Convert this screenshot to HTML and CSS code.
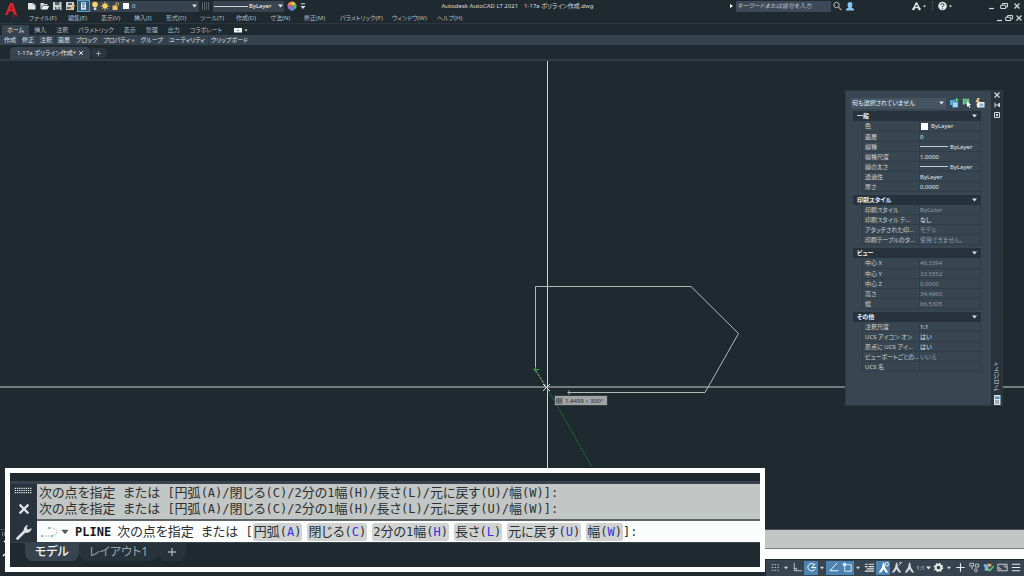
FILE: index.html
```html
<!DOCTYPE html>
<html lang="ja">
<head>
<meta charset="utf-8">
<title>Autodesk AutoCAD LT 2021</title>
<link rel="stylesheet" href="styles.css">
</head>
<body>
<svg class="defs" width="0" height="0" aria-hidden="true">
  <symbol id="caret" viewBox="0 0 5 4"><path d="M0 .5h5L2.500 3.500z" fill="currentColor"/></symbol>
  <symbol id="close" viewBox="0 0 8 8"><path d="M1.500 1.500l5 5M6.500 1.500l-5 5" stroke="currentColor" stroke-width="1.300" fill="none"/></symbol>
  <symbol id="restore" viewBox="0 0 8 8"><path d="M2.500 3V1.500h5V5H6M.7 3.200h5v3.300h-5z" stroke="currentColor" fill="none"/></symbol>
  <symbol id="min" viewBox="0 0 8 8"><path d="M2 6.500h5" stroke="currentColor" stroke-width="1.200"/></symbol>
  <symbol id="wrench" viewBox="0 0 16 16"><path d="M1.500 14.500l8-8" stroke="currentColor" stroke-width="2.600" stroke-linecap="round"/><path d="M8 8.500C7 5 8.500 1.500 12 1l-1.500 3 1.800 1.700L15.500 4c.2 3.500-3.500 6-7.500 4.500z" fill="currentColor"/></symbol>
  <symbol id="person" viewBox="0 0 10 10"><path d="M1 9.500V8l2.500-1.500C1.800 4 2.500 1 5 1s3.200 3 1.500 5.500L9 8v1.500z" fill="currentColor"/></symbol>
  <symbol id="scaleA" viewBox="0 0 12 12"><path d="M5.500 1.500h1.200L7.400 6l3 4.500H8.200L6 7.500l-2.200 3H1.600l3-4.500z" fill="currentColor"/></symbol>
</svg>

<header class="top">
  <svg class="logo" viewBox="0 0 25 24"><path d="M5 15L10 3h3l4 12h-3l-1-3.500H9L7.500 15z" fill="#d6262c"/><path d="M10.200 9.200h2.200l-.8-3.200z" fill="#5c1218"/><path d="M13 14.500v2.500h2M15.500 14.500h2.500M16.700 14.500V17" stroke="#a82429" stroke-width=".7" fill="none"/></svg>
  <div class="topmain">
    <div class="titlebar">
      <div class="quick">
        <button class="ic" aria-label="新規"><svg viewBox="0 0 13 12"><path d="M3 3h5l2.500 2v4.500H3z" fill="#e4e6e6"/><path d="M8 3v2h2.500" stroke="#78828a" stroke-width=".6" fill="none"/></svg></button>
        <button class="ic" aria-label="開く"><svg viewBox="0 0 13 12"><path d="M2.500 9.500V3h3l1 1h3v1.500H4.500z" fill="#d4d8da"/><path d="M4.800 6h6.500l-2 3.500H3z" fill="#eceeee"/></svg></button>
        <button class="ic" aria-label="上書き保存"><svg viewBox="0 0 13 12"><path d="M2 2h8.500v8H2z" fill="#ccd1d3"/><path d="M4 2h4.500v3H4zM4 7h5v3H4z" fill="#56616b"/><path d="M5 8h3" stroke="#fff"/></svg></button>
        <button class="ic" aria-label="名前を付けて保存"><svg viewBox="0 0 13 12"><path d="M2 2h8v8H2z" fill="#ccd1d3"/><path d="M4 3h4v2H4zM3 7h4v2H3z" fill="#56616b"/><path d="M6 9.500l4.500-4.500" stroke="#edb654" stroke-width="1.800"/></svg></button>
        <button class="ic on" aria-label="印刷"><svg viewBox="0 0 13 12"><path d="M3.500 1.500h6v9h-6z" fill="#e4e8ea"/><path d="M4.500 2.500h4v2h-4z" fill="#4b8fc0"/><path d="M5 6h3M5 8h3" stroke="#53616d"/></svg></button>
        <div class="layer">
          <svg viewBox="0 0 42 12" width="42" height="12"><circle cx="5" cy="4.500" r="2.800" fill="#f6d36d"/><path d="M3.800 7.500h2.500v2.500H3.800z" fill="#d9dcdc"/><path d="M15 1.500v9M10.500 6h9M12 3l6 6M18 3l-6 6" stroke="#e9b754" stroke-width=".9"/><circle cx="15" cy="6" r="2.500" fill="#ffd568"/><path d="M22.500 5.500h5v4.500h-5z" fill="#f2c460"/><path d="M26 5.500V3.500q1.300-2 2.600 0V5" stroke="#f2c460" fill="none"/><path d="M33 3h6v6h-6z" fill="#fff"/></svg>
          <select aria-label="画層"><option>0</option></select>
          <svg class="ct"><use href="#caret"/></svg>
        </div>
        <svg class="hatch" viewBox="0 0 8 8"><path d="M0 1h8M0 3h8M0 5h8M0 7h8" stroke="#909aa0" stroke-dasharray="1 1"/></svg>
        <div class="ltype"><i class="rule"></i>
          <select aria-label="線種"><option>ByLayer</option></select>
          <svg class="ct"><use href="#caret"/></svg>
        </div>
        <svg class="wheel" viewBox="0 0 10 10"><path d="M5 5V.5A4.500 4.500 0 0 1 9 3z" fill="#f4c84b"/><path d="M5 5l4-2a4.500 4.500 0 0 1-1 5.300z" fill="#63b260"/><path d="M5 5l3 3.300a4.500 4.500 0 0 1-5.500.5z" fill="#558fe2"/><path d="M5 5L2.500 8.800A4.500 4.500 0 0 1 .6 4z" fill="#ad67c9"/><path d="M5 5L.6 4A4.500 4.500 0 0 1 5 .5z" fill="#ed8651"/></svg>
        <svg class="more" viewBox="0 0 6 7"><path d="M1 .8h4" stroke="#dde0e0"/><path d="M.5 3h5L3 6z" fill="#dde0e0"/></svg>
      </div>
      <div class="apptitle"><span>Autodesk AutoCAD LT 2021</span><span>1-17a ポリライン作成.dwg</span></div>
      <div class="tools">
        <svg class="play" viewBox="0 0 4 6"><path d="M1 1l3 2-3 2z" fill="#fff"/></svg>
        <input type="text" class="search" placeholder="キーワードまたは語句を入力" aria-label="検索">
        <button class="ic" aria-label="検索"><svg viewBox="0 0 13 12"><circle cx="5.500" cy="5" r="2.700" fill="none" stroke="#b5bbbd"/><path d="M7.500 7.200l3 3" stroke="#d0a37a" stroke-width="1.200"/></svg></button>
        <button class="ic user" aria-label="サインイン"><svg viewBox="0 0 10 10"><use href="#person"/></svg></button>
        <button class="ic app" aria-label="App Store"><svg viewBox="0 0 13 12"><path d="M6.500 2.500L3.500 8.500M6.500 2.500l3 6M4.500 7.500h4" stroke="#e1e4e5" stroke-width="1.400"/><circle cx="3.500" cy="9" r="1.200" fill="#fff"/><circle cx="9.500" cy="9" r="1.200" fill="#fff"/></svg></button>
        <svg class="ct sm"><use href="#caret"/></svg>
        <i class="vsep"></i>
        <button class="ic" aria-label="ヘルプ"><svg viewBox="0 0 13 12"><circle cx="6.500" cy="6" r="4.300" fill="#e2e5e6"/><path d="M5 5q0-1.500 1.500-1.500T8 5q0 .8-1.500 1.500v.8M6.500 8.300v1" stroke="#35424d" fill="none"/></svg></button>
        <svg class="ct sm"><use href="#caret"/></svg>
        <div class="win">
          <button aria-label="最小化"><svg viewBox="0 0 8 8"><use href="#min"/></svg></button>
          <button aria-label="元に戻す"><svg viewBox="0 0 8 8"><use href="#restore"/></svg></button>
          <button aria-label="閉じる"><svg viewBox="0 0 8 8"><use href="#close"/></svg></button>
        </div>
      </div>
    </div>
    <div class="menurow">
      <nav class="menu">
        <button>ファイル(F)</button><button>編集(E)</button><button>表示(V)</button><button>挿入(I)</button><button>形式(O)</button><button>ツール(T)</button><button>作成(D)</button><button>寸法(N)</button><button>修正(M)</button><button>パラメトリック(P)</button><button>ウィンドウ(W)</button><button>ヘルプ(H)</button>
      </nav>
      <div class="docwin">
        <button aria-label="図面を最小化"><svg viewBox="0 0 8 8"><use href="#min"/></svg></button>
        <button aria-label="図面を元に戻す"><svg viewBox="0 0 8 8"><use href="#restore"/></svg></button>
        <button aria-label="図面を閉じる"><svg viewBox="0 0 8 8"><use href="#close"/></svg></button>
      </div>
    </div>
  </div>
</header>

<nav class="ribbontabs">
  <button class="active">ホーム</button><button>挿入</button><button>注釈</button><button>パラメトリック</button><button>表示</button><button>管理</button><button>出力</button><button>コラボレート</button>
  <button aria-label="リボンを最小化" class="mini"><svg viewBox="0 0 14 6"><path d="M0 1h8v4.500H0z" fill="#f3f5f4"/><path d="M3 4l1-1.500L5 4z" fill="#35424c"/><path d="M10.500 2.500h3L12 4.500z" fill="#dde0e0"/></svg></button>
</nav>
<div class="ribbonpanels">
  <button>作成</button><button>修正</button><button>注釈</button><button>画層</button><button>ブロック</button><button>プロパティ »</button><button>グループ</button><button>ユーティリティ</button><button>クリップボード</button>
</div>
<div class="filetabs">
  <div class="filetab"><span>1-17a ポリライン作成*</span><button aria-label="タブを閉じる"><svg viewBox="0 0 8 8"><use href="#close"/></svg></button></div>
  <button class="newtab" aria-label="新しいタブ"><svg viewBox="0 0 8 8"><path d="M4 1v6M1 4h6" stroke="currentColor"/></svg></button>
</div>

<main class="canvas">
  <svg class="drawing" aria-label="図面">
    <path d="M547.500 0V480" stroke="#cfd4d4"/>
    <path d="M0 326h1600" stroke="#8f9798" stroke-width="1.500"/>
    <path d="M535.500 309V225.500H691L738.500 272.500 705 331.500H569M569 329.500v4M567.500 331.500h3" fill="none" stroke="#b4babc"/>
    <path d="M535.500 309L546 326" stroke="#8fb79a" stroke-dasharray="3 1"/>
    <path d="M547 327L592 406" stroke="#1c9428" stroke-dasharray="2 1" stroke-width=".8"/>
    <path d="M533 308.500h6M535.500 306v5" stroke="#24b62c"/>
    <path d="M543 323l7 7M550 323l-7 7" stroke="#dfe3df"/>
  </svg>
  <div class="tip"><svg viewBox="0 0 8 8"><path d="M.5 2h4v5h-4zM2.500 1v7M.5 4.500h7M6 1v6M5 2h2.500M5 7h2.500" fill="none" stroke="#3f4548" stroke-width=".8"/></svg>1.4459 &lt; 300°</div>

  <aside class="palette">
    <div class="props">
      <div class="selrow">
        <div class="objsel"><select aria-label="選択オブジェクト"><option>何も選択されていません</option></select><svg class="ct"><use href="#caret"/></svg></div>
        <button aria-label="PICKADD切り替え"><svg viewBox="0 0 10 10"><path d="M1 2h5v5H1z" fill="#5ba9de"/><path d="M3.500 4h5.500v5.500H3.500z" fill="#a5d4f4" stroke="#3578ac" stroke-width=".6"/><path d="M7.700 0v4M5.700 2h4" stroke="#5ed77b" stroke-width="1.200"/></svg></button>
        <button aria-label="オブジェクトを選択"><svg viewBox="0 0 10 10"><path d="M1 1h6v5H1z" fill="#5fb681" stroke="#a8dfb8" stroke-width=".7" stroke-dasharray="1 .6"/><path d="M5 3l4 4-1.800.2L8.500 9.500l-1 .5-1.200-2.300L5 9z" fill="#fff"/></svg></button>
        <button aria-label="クイック選択"><svg viewBox="0 0 10 10"><path d="M2 4h7.500v5.500H2z" fill="#f1f3f2"/><path d="M4.500 5.500h4v3h-4z" fill="#83b4da"/><path d="M2.500 0L.5 4h1.700L1 8l4-5H3.300L5 0z" fill="#efc77a"/></svg></button>
      </div>
      <section>
        <h2>一般<svg class="ct"><use href="#caret"/></svg></h2>
        <table>
          <tr><th>色</th><td><i class="swatch"></i>ByLayer</td></tr>
          <tr><th>画層</th><td>0</td></tr>
          <tr><th>線種</th><td><i class="line"></i>ByLayer</td></tr>
          <tr><th>線種尺度</th><td>1.0000</td></tr>
          <tr><th>線の太さ</th><td><i class="line"></i>ByLayer</td></tr>
          <tr><th>透過性</th><td>ByLayer</td></tr>
          <tr><th>厚さ</th><td>0.0000</td></tr>
        </table>
      </section>
      <section>
        <h2>印刷スタイル<svg class="ct"><use href="#caret"/></svg></h2>
        <table>
          <tr class="ro"><th>印刷スタイル</th><td>ByColor</td></tr>
          <tr><th>印刷スタイル テ...</th><td>なし</td></tr>
          <tr class="ro"><th>アタッチされた印...</th><td>モデル</td></tr>
          <tr class="ro"><th>印刷テーブルのタ...</th><td>使用できません。</td></tr>
        </table>
      </section>
      <section>
        <h2>ビュー<svg class="ct"><use href="#caret"/></svg></h2>
        <table>
          <tr class="ro"><th>中心 X</th><td>46.3394</td></tr>
          <tr class="ro"><th>中心 Y</th><td>33.5552</td></tr>
          <tr class="ro"><th>中心 Z</th><td>0.0000</td></tr>
          <tr class="ro"><th>高さ</th><td>34.4960</td></tr>
          <tr class="ro"><th>幅</th><td>66.5305</td></tr>
        </table>
      </section>
      <section>
        <h2>その他<svg class="ct"><use href="#caret"/></svg></h2>
        <table>
          <tr><th>注釈尺度</th><td>1:1</td></tr>
          <tr><th>UCS アイコン オン</th><td>はい</td></tr>
          <tr><th>原点に UCS アイ...</th><td>はい</td></tr>
          <tr class="ro"><th>ビューポートごとの...</th><td>いいえ</td></tr>
          <tr><th>UCS 名</th><td></td></tr>
        </table>
      </section>
    </div>
    <div class="grip">
      <button aria-label="閉じる"><svg viewBox="0 0 8 8"><use href="#close"/></svg></button>
      <button aria-label="自動的に隠す"><svg viewBox="0 0 8 8"><path d="M2 1.500v5M2 4h2M6.500 2L4.500 4l2 2z" stroke="currentColor" fill="currentColor"/></svg></button>
      <button aria-label="プロパティ設定"><svg viewBox="0 0 8 8"><path d="M1.500 1.500h5v5h-5z" stroke="currentColor" fill="none"/><circle cx="4" cy="4" r="1.200" fill="currentColor"/></svg></button>
      <span class="vtitle">プロパティ</span>
      <svg class="pico" viewBox="0 0 8 10"><path d="M1 0h6.500v10H1z" fill="#dfe4e6"/><path d="M2 1.500h4.500v2.500H2z" fill="#4795c9"/><path d="M2 6h4M2 8h4" stroke="#637482"/></svg>
    </div>
  </aside>
</main>

<div class="cmdband">
  <div class="cmdside"><svg viewBox="0 0 5 28"><path d="M2 3h3M2 5h3" stroke="#bbc2c4" stroke-dasharray="1 1"/><path d="M4 11l1 1M3 26l2-2" stroke="#fff" stroke-width="1.500"/></svg></div>
  <div class="cmdfill"><div class="hist"></div><div class="entry"></div></div>
</div>
<footer class="status">
  <div class="stbar">
    <button class="w14" aria-label="グリッド"><svg viewBox="0 0 14 14"><path d="M3 4h9M3 7h9M3 10h9" stroke="#c6ccce" stroke-dasharray="1.500 1.500" stroke-width="1.200"/></svg></button>
    <button class="ar" aria-label="グリッド設定"><svg class="ct"><use href="#caret"/></svg></button>
    <button class="w14" aria-label="直交モード"><svg viewBox="0 0 14 14"><path d="M3.500 2v8.500H12M3.500 8H6v2.500" stroke="#c6ccce" fill="none"/></svg></button>
    <button class="w14 on" aria-label="極トラッキング"><svg viewBox="0 0 14 14"><path d="M10 4a4 4 0 1 0 .8 4M7 7h5M7 7l4-4" stroke="#fff" fill="none"/></svg></button>
    <button class="ar" aria-label="極設定"><svg class="ct"><use href="#caret"/></svg></button>
    <button class="w14 on" aria-label="トラッキング"><svg viewBox="0 0 14 14"><path d="M11 2L3 10.500h9" stroke="#fff" fill="none"/></svg></button>
    <button class="w14 on" aria-label="オブジェクトスナップ"><svg viewBox="0 0 14 14"><path d="M4 4h7v7H4z" stroke="#dff0ff" fill="none"/><path d="M2 2h3.500v3.500H2z" fill="#d6ecfb"/></svg></button>
    <button class="ar" aria-label="スナップ設定"><svg class="ct"><use href="#caret"/></svg></button>
    <button class="w14" aria-label="線の太さ"><svg viewBox="0 0 14 14"><path d="M2 3.500h3M6 3.500h6M2 6h3M6 6h6M4 8.500h8M2 11h10" stroke="#dfe2e3" stroke-width="1.300"/></svg></button>
    <button class="w14 on" aria-label="注釈表示"><svg viewBox="0 0 12 12"><use href="#scaleA"/><circle cx="9" cy="3" r="1.600" fill="none" stroke="#fff" stroke-width=".8"/></svg></button>
    <button class="w13" aria-label="注釈自動尺度"><svg viewBox="0 0 12 12"><use href="#scaleA"/><path d="M8 4l3-3M8.500 1.500h2" stroke="currentColor" stroke-width=".8"/></svg></button>
    <button class="w13" aria-label="注釈尺度"><svg viewBox="0 0 12 12"><use href="#scaleA"/></svg></button>
    <button class="ratio">1:1<svg class="ct"><use href="#caret"/></svg></button>
    <button class="w14" aria-label="ワークスペース"><svg viewBox="0 0 14 14"><circle cx="7" cy="7" r="3" fill="none" stroke="#e9ebeb" stroke-width="2"/><circle cx="7" cy="7" r="4.500" fill="none" stroke="#e9ebeb" stroke-width="1.300" stroke-dasharray="1.750 1.780"/></svg></button>
    <button class="ar" aria-label="ワークスペース設定"><svg class="ct"><use href="#caret"/></svg></button>
    <button class="w14" aria-label="注釈モニター"><svg viewBox="0 0 14 14"><path d="M7 2.500v9M2.500 7h9" stroke="#e9ebeb" stroke-width="1.200"/></svg></button>
    <button class="w14" aria-label="選択表示"><svg viewBox="0 0 14 14"><path d="M2 2.500h4v3H2zM8 3.500h3.500v3H8z" stroke="#c6ccce" fill="none"/><circle cx="8.500" cy="10" r="1.600" fill="none" stroke="#c6ccce"/><path d="M4.500 6v3" stroke="#c6ccce"/></svg></button>
    <button class="w14" aria-label="グラフィックス"><svg viewBox="0 0 14 14"><path d="M2 3.500h4v3H2z" fill="#71b5e7"/><path d="M6 3h4v3H6z" fill="#ddb667"/><path d="M3 6.500h4v4H3z" fill="#8aabe3"/><path d="M6.500 8.500l2 2 4-5" stroke="#63c86c" stroke-width="1.600" fill="none"/></svg></button>
    <button class="w14" aria-label="フルスクリーン"><svg viewBox="0 0 14 14"><path d="M2 3.500h10v7H2zM8 5.500h2.500v2M6 8.500H3.500v-2" stroke="#d4d8d9" fill="none"/></svg></button>
    <button class="w14" aria-label="カスタマイズ"><svg viewBox="0 0 14 14"><path d="M2 3.500h9M2 7h9M2 10.500h9" stroke="#e9ebeb" stroke-width="1.200"/></svg></button>
  </div>
</footer>

<section class="inset" aria-label="コマンドライン">
  <div class="insetstrip"></div>
  <div class="cmd">
    <div class="cmdtools">
      <svg class="dots" viewBox="0 0 20 8"><path d="M0 1.500h19M0 4h19M0 6.500h19" stroke="#dfe3e4" stroke-width="1.300" stroke-dasharray="1.500 1"/></svg>
      <button aria-label="コマンドラインを閉じる" class="x"><svg viewBox="0 0 8 8"><use href="#close"/></svg></button>
      <button aria-label="カスタマイズ"><svg viewBox="0 0 16 16"><use href="#wrench"/></svg></button>
    </div>
    <div class="cmdtext">
      <div class="log">
        <p>次の点を指定<b> </b>または<b> [</b>円弧<b>(A)/</b>閉じる<b>(C)/2</b>分の<b>1</b>幅<b>(H)/</b>長さ<b>(L)/</b>元に戻す<b>(U)/</b>幅<b>(W)]:</b></p>
        <p>次の点を指定<b> </b>または<b> [</b>円弧<b>(A)/</b>閉じる<b>(C)/2</b>分の<b>1</b>幅<b>(H)/</b>長さ<b>(L)/</b>元に戻す<b>(U)/</b>幅<b>(W)]:</b></p>
      </div>
      <div class="prompt">
        <svg class="pl" viewBox="0 0 20 14"><path d="M2 11h10q5-1 5-4t-5-4H9" fill="none" stroke="#a6adb0" stroke-width=".8" stroke-dasharray="2 1"/><path d="M1 10h2v2H1zM11 10h2v2h-2zM8 2h2v2H8z" fill="#78bce8"/></svg>
        <svg class="dd" viewBox="0 0 5 4"><use href="#caret"/></svg>
        <strong>PLINE</strong>
        <span>次の点を指定<b> </b>または<b> [</b></span>
        <span class="opts"><button>円弧<b>(<em>A</em>)</b></button><button>閉じる<b>(<em>C</em>)</b></button><button><b>2</b>分の<b>1</b>幅<b>(<em>H</em>)</b></button><button>長さ<b>(<em>L</em>)</b></button><button>元に戻す<b>(<em>U</em>)</b></button><button>幅<b>(<em>W</em>)</b></button></span><b>]:</b>
      </div>
    </div>
  </div>
  <div class="layouts">
    <button class="active">モデル</button><button>レイアウト1</button><button class="add" aria-label="新しいレイアウト"><svg viewBox="0 0 8 8"><path d="M4 0v8M0 4h8" stroke="currentColor" stroke-width="1.500"/></svg></button>
  </div>
</section>
</body>
</html>
```

FILE: styles.css
```css
* { box-sizing: border-box; }
body {
  margin: 0;
  height: 100vh;
  display: flex;
  flex-direction: column;
  position: relative;
  overflow: hidden;
  background: #1f2930;
  color: #d3d7d9;
  font: 6px/10px "Noto Sans", "Noto Sans CJK JP", sans-serif;
  font-feature-settings: "palt";
  white-space: nowrap;
}
.defs { position: absolute; }
svg { display: block; flex: none; }
button, input, select {
  font: inherit;
  font-feature-settings: inherit;
  color: inherit;
  background: none;
  border: 0;
  padding: 0;
  margin: 0;
  white-space: nowrap;
  appearance: none;
}
.ct { width: 5px; height: 4px; color: #dfe2e3; }
.ct.sm { width: 3px; height: 3px; }

/* title and menu */
.top { display: flex; height: 24px; border-bottom: 1px solid #2b3640; }
.logo { width: 25px; height: 24px; }
.topmain { flex: 1; min-width: 0; }
.titlebar { display: flex; height: 12px; align-items: center; }
.quick, .tools { display: flex; align-items: center; height: 12px; }
.ic { width: 13px; height: 12px; }
.ic svg { width: 100%; height: 12px; }
.ic.on { background: #315a78; border: 1px solid #59a0cf; }
.ic.on svg { height: 10px; }
.layer { display: flex; align-items: center; width: 109px; height: 11px; background: #37434f; padding-right: 2px; }
.layer select { flex: 1; }
.hatch { width: 8px; height: 8px; margin: 0 3px; }
.ltype { display: flex; align-items: center; width: 71px; height: 11px; background: #37434f; padding: 0 1px; }
.ltype select { flex: 1; padding-left: 1px; color: #fff; }
.rule { width: 34px; height: 1px; background: #cbd0d2; }
.wheel { width: 10px; height: 10px; margin-left: 3px; }
.more { width: 6px; height: 7px; margin-left: 3px; }
.apptitle { flex: 1; display: flex; justify-content: center; gap: 6px; color: #d9dddd; }
.play { width: 4px; height: 6px; margin-right: 3px; }
.search { width: 95px; height: 11px; background: #3e4958; padding: 0 1px; font-style: italic; }
.search::placeholder { color: #c0c5ca; opacity: 1; }
.user { color: #83c7f2; width: 10px; margin-left: 1px; }
.user svg { height: 10px; }
.app { margin-left: 55px; }
.vsep { width: 1px; height: 10px; background: #3a4650; margin: 0 3px 0 6px; }
.win { display: flex; gap: 5px; margin: 0 3px 0 35px; }
.win button, .docwin button { width: 8px; height: 8px; }
.win button svg, .docwin button svg { width: 8px; height: 8px; }
.menurow { display: flex; justify-content: space-between; align-items: center; height: 12px; }
.menu {
  display: grid;
  grid-template-columns: 39px 33px 33px 32px 34px 36px 34px 34px 36px 52px 45px 30px;
  padding-left: 4px;
  color: #b6bcc0;
}
.menu button { text-align: left; }
.docwin { display: flex; gap: 2px; padding-right: 1px; }

/* ribbon */
.ribbontabs { display: flex; height: 11px; color: #b6bcc0; padding-left: 2px; }
.ribbontabs button { height: 10px; margin-top: 1px; padding: 0 5px; }
.ribbontabs .active { background: #37444f; color: #e2e5e6; }
.ribbontabs .mini { padding: 2px 0; margin-left: 7px; }
.mini svg { width: 14px; height: 6px; }
.ribbonpanels { display: flex; height: 10px; padding-left: 2px; background: #37444f; color: #dde0e2; }
.ribbonpanels button { padding: 0 3px 0 2px; border-right: 1px solid #2d3943; }
.ribbonpanels button:last-child { border: 0; }
.filetabs { display: flex; align-items: flex-end; height: 16px; padding-left: 10px; border-bottom: 2px solid #303c46; }
.filetab { display: flex; align-items: center; gap: 2px; width: 80px; height: 12px; padding-left: 7px; background: #37444f; border-radius: 4px 4px 0 0; color: #e3e6e7; }
.filetab svg { width: 6px; height: 6px; }
.newtab { width: 16px; height: 10px; margin: 0 0 1px 1px; padding: 1px 4px; background: #2a353e; border-radius: 4px; color: #a3abb0; }
.newtab svg { width: 7px; height: 7px; }

/* drawing area */
.canvas { flex: 1; position: relative; overflow: hidden; min-height: 0; }
.drawing { position: absolute; inset: 0; width: 100%; height: 100%; }
.tip {
  position: absolute;
  left: 554px;
  top: 334px;
  display: flex;
  align-items: center;
  gap: 2px;
  padding: 0 4px 0 1px;
  background: #a0a4a5;
  border: 1px solid #343c40;
  color: #22282b;
  height: 11px;
}
.tip svg { width: 7px; height: 7px; }

/* properties palette */
.palette { position: absolute; right: 21px; top: 29px; display: flex; width: 158px; height: 316px; background: #384652; border: 1px solid #2d3943; }
.props { flex: 1; padding: 6px 10px 0 5px; min-width: 0; }
.selrow { display: flex; align-items: center; gap: 3px; height: 12px; margin-bottom: 2px; margin-right: -5px; }
.selrow button, .selrow button svg { width: 10px; height: 10px; }
.objsel { display: flex; align-items: center; width: 95px; height: 11px; background: #465361; padding: 0 2px 0 1px; color: #eef0f0; }
.objsel select { flex: 1; }
section h2 {
  display: flex;
  align-items: center;
  justify-content: space-between;
  margin: 0 0 0 2px;
  height: 10px;
  padding: 0 4px;
  background: #28323d;
  color: #f3f4f4;
  font-size: 6px;
  font-weight: 700;
}
.props section { margin-bottom: 3px; }
table { border-collapse: collapse; table-layout: fixed; width: calc(100% - 11px); margin-left: 11px; }
tr { height: 10px; }
th, td { padding: 1px 0 0 2px; height: 10px; line-height: 8px; border-bottom: 1px solid #303c47; text-align: left; font-weight: 400; color: #cdd2d5; }
th { width: 57px; border-left: 1px solid #303c47; }
td { padding-left: 0; border-right: 1px solid #303c47; color: #e4e7e8; border-left: 1px solid #303c47; }
.ro td { color: #919ba2; }
.swatch { display: inline-block; width: 7px; height: 7px; background: #fff; vertical-align: middle; margin: 0 3px 0 1px; }
.line { display: inline-block; width: 28px; height: 1px; background: #c5cbcd; vertical-align: middle; margin: 0 2px 0 0; }
.grip { width: 11px; background: #28333d; display: flex; flex-direction: column; align-items: center; gap: 2px; }
.grip button, .grip button svg { width: 8px; height: 8px; }
.vtitle { writing-mode: vertical-rl; transform: rotate(180deg); margin: auto 0 2px; line-height: 10px; }
.pico { width: 8px; height: 10px; }

/* docked command line and status bar */
.cmdband { display: flex; height: 30px; border-top: 1px solid #47525a; }
.cmdside { width: 12px; }
.cmdside svg { width: 5px; height: 28px; }
.cmdfill { flex: 1; display: flex; flex-direction: column; }
.hist { height: 19px; background: #c2c6c4; border-bottom: 1px solid #7b8183; }
.entry { flex: 1; background: #fbfdfc; }
.status { display: flex; justify-content: flex-end; height: 17px; border-top: 1px solid #1f2930; }
.stbar { display: flex; align-items: center; background: #37444f; padding: 0 1px 1px 2px; }
.stbar button { display: flex; align-items: center; justify-content: center; height: 14px; }
.stbar svg:not(.ct) { width: 13px; height: 13px; }
.w13 { width: 13px; }
.w14 { width: 14px; }
.ar { width: 8px; }
.ar .ct { width: 4px; }
.stbar .on { background: #4b83b1; color: #fff; }
.ratio { gap: 1px; width: 15px; }

/* enlarged command line */
.inset {
  position: absolute;
  left: 5px;
  bottom: 4px;
  width: 760px;
  border: 5px solid #fff;
  background: #1f2930;
  font-size: 13px;
  line-height: 16px;
}
.insetstrip { height: 11px; border-bottom: 3px solid #37434f; }
.cmd { display: flex; height: 58px; }
.cmdtools { width: 27px; background: #28333d; display: flex; flex-direction: column; align-items: center; justify-content: space-between; padding: 3px 0 2px 0; color: #dfe3e4; }
.dots { width: 19px; height: 7px; }
.cmdtools button svg { width: 16px; height: 16px; }
.cmdtools .x svg { width: 14px; height: 14px; }
.cmdtext { flex: 1; display: flex; flex-direction: column; color: #2c3133; font-family: "DejaVu Sans Mono", "Noto Sans CJK JP", monospace; }
.log { height: 37px; padding: 1px 2px; background: #c2c6c4; border-bottom: 2px solid #5d6568; }
.log p { margin: 0; height: 16px; }
.cmdtext b { font-weight: 400; font-size: 12px; white-space: pre; }
.prompt { display: flex; align-items: center; height: 21px; padding-left: 3px; background: #fbfdfc; }
.pl { width: 20px; height: 14px; }
.dd { width: 8px; height: 6px; margin: 0 6px 0 1px; color: #555c5f; }
.prompt strong { font-size: 12px; margin-right: 6px; color: #16191a; }
.opts { display: flex; gap: 5px; }
.opts button { height: 18px; padding: 0 1px; background: #d0d3d2; border-radius: 3px; line-height: 17px; }
.opts em { font-style: normal; color: #3430e6; }
.layouts { display: flex; height: 25px; padding: 0 0 6px 15px; font-size: 12px; line-height: 18px; color: #9ca5aa; border-top: 1px solid #37434f; }
.layouts button { padding: 0 10px; background: #27323b; border-radius: 0 0 8px 8px; }
.layouts .active { background: #37444f; color: #f0f2f2; font-weight: 500; }
.layouts .add svg { width: 8px; height: 8px; }
```
